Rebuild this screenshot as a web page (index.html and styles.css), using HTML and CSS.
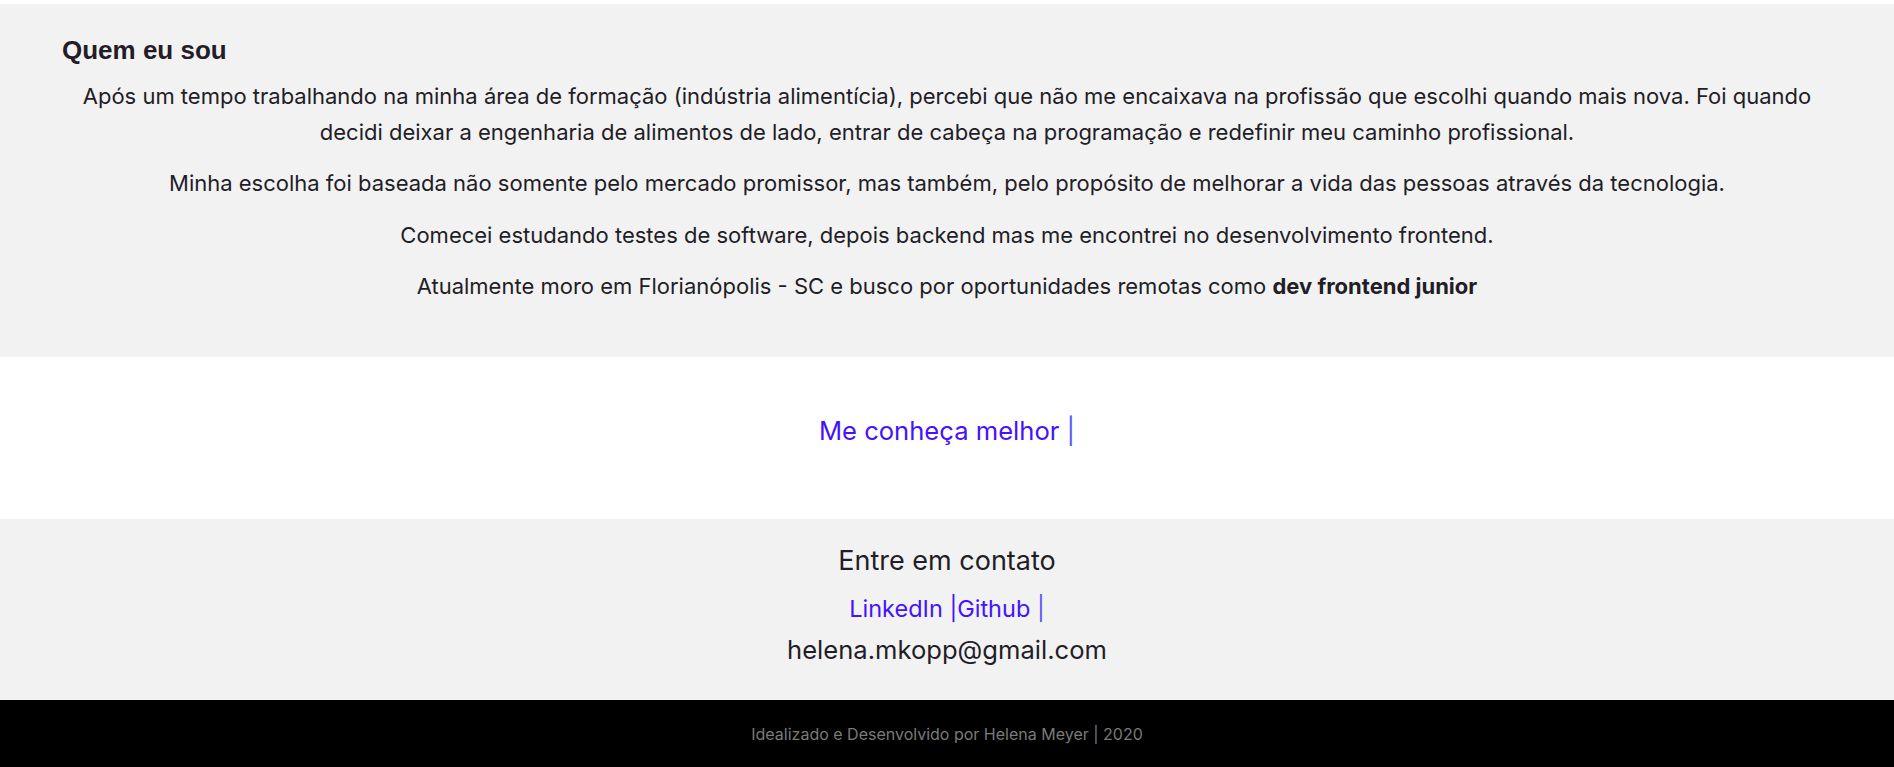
FILE: index.html
```html
<!DOCTYPE html>
<html lang="pt-BR">
<head>
<meta charset="utf-8">
<title>Helena Meyer</title>
<link rel="stylesheet" href="styles.css">
</head>
<body>
<section class="about">
  <h2 class="about-title">Quem eu sou</h2>
  <div class="about-text">
    <p>Após um tempo trabalhando na minha área de formação (indústria alimentícia), percebi que não me encaixava na profissão que escolhi quando mais nova. Foi quando decidi deixar a engenharia de alimentos de lado, entrar de cabeça na programação e redefinir meu caminho profissional.</p>
    <p>Minha escolha foi baseada não somente pelo mercado promissor, mas também, pelo propósito de melhorar a vida das pessoas através da tecnologia.</p>
    <p>Comecei estudando testes de software, depois backend mas me encontrei no desenvolvimento frontend.</p>
    <p>Atualmente moro em Florianópolis - SC e busco por oportunidades remotas como <strong>dev frontend junior</strong></p>
  </div>
</section>
<section class="more">
  <a class="more-link" href="#">Me conheça melhor <span class="cursor">|</span></a>
</section>
<section class="contact">
  <h3 class="contact-title">Entre em contato</h3>
  <div class="contact-links"><a href="#">LinkedIn |</a><a href="#">Github</a> <span class="cursor">|</span></div>
  <div class="contact-mail">helena.mkopp@gmail.com</div>
</section>
<footer class="footer">
  <p>Idealizado e Desenvolvido por Helena Meyer | 2020</p>
</footer>
</body>
</html>
```

FILE: styles.css
```css
html, body {
  margin: 0;
  padding: 0;
}

body {
  background: #ffffff;
  padding-top: 4px;
  font-family: Inter, "Liberation Sans", Arial, sans-serif;
  color: #221d26;
}

.about {
  background: #f2f2f2;
  padding: 31px 62px 37px;
  height: 353px;
  box-sizing: border-box;
}

.about-title {
  margin: 0;
  font-family: "Liberation Sans", Arial, sans-serif;
  font-weight: 700;
  font-size: 26px;
  line-height: 30px;
  color: #221d26;
}

.about-text {
  margin-top: 12.5px;
  display: flex;
  flex-direction: column;
  gap: 15.5px;
}

.about-text p {
  margin: 0;
  text-align: center;
  font-size: 22px;
  line-height: 36px;
}

.about-text strong {
  font-weight: 700;
}

.more {
  height: 162px;
  box-sizing: border-box;
  padding-top: 59px;
  text-align: center;
}

.more-link {
  font-size: 25.6px;
  line-height: 30px;
  color: #4412ff;
  text-decoration: none;
}

.cursor {
  color: #5858ff;
}

.contact {
  background: #f2f2f2;
  height: 181px;
  box-sizing: border-box;
  padding-top: 25px;
  text-align: center;
}

.contact-title {
  margin: 0;
  font-weight: 400;
  font-size: 27px;
  line-height: 34px;
}

.contact-links {
  margin-top: 17px;
  font-size: 23.5px;
  line-height: 28px;
}

.contact-links a {
  color: #4412ff;
  text-decoration: none;
}

.contact-mail {
  margin-top: 11px;
  font-size: 25.6px;
  line-height: 32px;
}

.footer {
  background: #000000;
  height: 67px;
  display: flex;
  align-items: center;
  justify-content: center;
}

.footer p {
  margin: 0;
  font-size: 16px;
  color: #7a7a7a;
}
```
